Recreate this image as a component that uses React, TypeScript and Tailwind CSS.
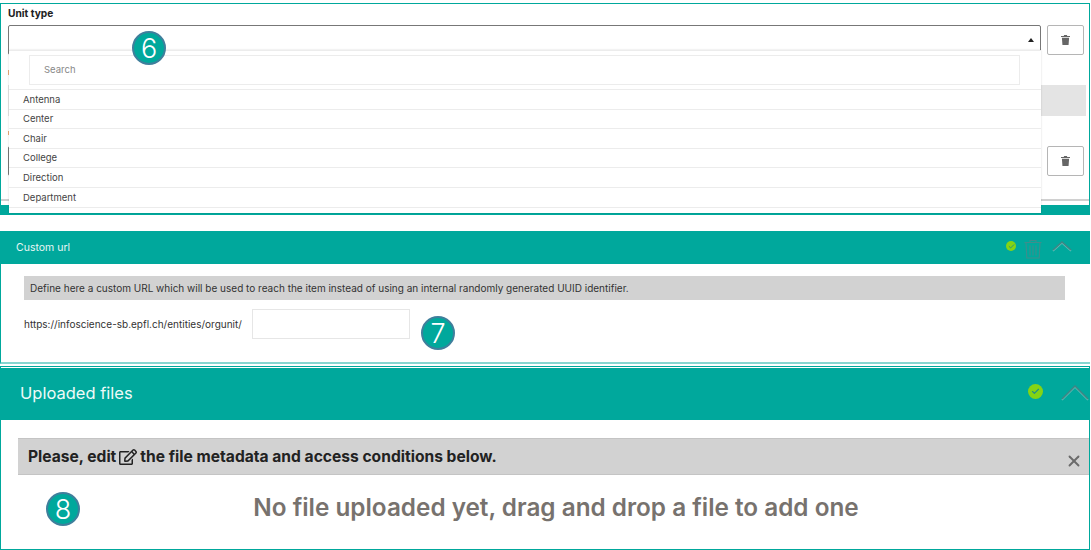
import { Check, X } from "lucide-react";
import { FaRegEdit } from "react-icons/fa";

const options = ["Antenna", "Center", "Chair", "College", "Direction", "Department"];

function Badge({ n, className }: { n: string; className: string }) {
  return (
    <div
      className={`absolute flex h-[34px] w-[34px] items-center justify-center rounded-full border-2 border-[#3f7f9c] bg-[#00a89c] text-[27px] font-light leading-none text-white ${className}`}
    >
      {n}
    </div>
  );
}

function TrashRow() {
  return (
    <div className="flex gap-[6px]">
      <div className="h-[30px] flex-1 rounded-[2px] border border-[#777] bg-white" />
      <button className="flex h-[30px] w-[37px] shrink-0 items-center justify-center rounded-[2px] border border-[#b5b5b5] bg-white">
        <svg width="9" height="10" viewBox="0 0 10 11" fill="#666">
          <path d="M3.5 0h3l.5 1h3v1.2H0V1h3zM1 3h8l-.6 8H1.6z" />
        </svg>
      </button>
    </div>
  );
}

function StatusDot({ large }: { large?: boolean }) {
  return (
    <span
      className={`flex items-center justify-center rounded-full bg-[#84d414] ${large ? "h-[15px] w-[15px]" : "h-[10px] w-[10px]"}`}
    >
      <Check size={large ? 9 : 7} strokeWidth={3} className="text-[#1c8f8c]" />
    </span>
  );
}

function Chevron({ w, h }: { w: number; h: number }) {
  return (
    <svg width={w} height={h + 1} viewBox={`0 0 ${w} ${h + 1}`} fill="none" strokeWidth="1.5">
      <path d={`M1 ${h}L${w / 2} 2L${w - 1} ${h}`} stroke="#63bdb6" />
      <path d={`M1 ${h - 1}L${w / 2} 1L${w - 1} ${h - 1}`} stroke="#3f8584" />
    </svg>
  );
}

function OutlineTrash() {
  return (
    <svg width="18" height="20" viewBox="0 0 18 20" fill="none" stroke="#3f8d8c" strokeWidth="1.1">
      <path d="M6 3V1.5h6V3M.5 3.5h17M2 3.5l.8 15.5h12.4L16 3.5M6 6.5v10M9 6.5v10M12 6.5v10" />
    </svg>
  );
}

export default function App() {
  return (
    <div className="relative h-[550px] w-[1091px] overflow-hidden bg-white pt-[3px] font-['Inter',sans-serif] text-[#333]">
      {/* unit type panel */}
      <section className="relative h-[212px] w-[1090px] overflow-hidden border border-[#00a89c] pl-[7px] pr-[5px]">
        <label className="block h-[21px] pt-[3px] text-[10.2px] font-bold leading-[13px] text-[#222]">Unit type</label>
        <div className="relative">
          <TrashRow />
          <span className="absolute right-[50px] top-[13px] h-0 w-0 border-x-[3px] border-b-[4px] border-x-transparent border-b-[#222]" />
        </div>
        <div className="mt-[30px] mr-[-2px] h-[31px] bg-[#e4e4e4]" />
        <div className="mt-[30px]">
          <TrashRow />
        </div>
        <div className="mx-[-7px] mt-[23px] h-[2px] bg-[#d0d0d0]" />
        <div className="mx-[-7px] mt-[4px] h-[11px] bg-[#00a89c]" />

        {/* open dropdown */}
        <div className="absolute left-[8px] top-[46px] w-[1032px] bg-white text-[9.5px] shadow-[0_0_2px_rgba(0,0,0,0.15)]">
          <div className="border-t border-[#ececec] px-[20px] py-[4px]">
            <div className="flex h-[30px] w-[991px] items-center border border-[#ececec] px-[14px] text-[#888]">Search</div>
          </div>
          {options.map((o) => (
            <div key={o} className="flex h-[19.6px] items-center border-t border-[#ececec] pl-[14px] pt-[1px] text-[#444]">
              {o}
            </div>
          ))}
          <div className="h-[6px] border-t border-[#ececec]" />
        </div>
        <span className="absolute left-[7px] top-[66px] h-[5px] w-[1px] bg-[#e0a070]" />
        <span className="absolute left-[7px] top-[127px] h-[4px] w-[1px] bg-[#e0a070]" />
      </section>

      {/* custom url panel */}
      <section className="mt-[16px] h-[133px] w-[1090px] border-b-2 border-l border-[#86d6d0] border-l-[#00a89c]">
        <div className="flex h-[33px] items-center bg-[#00a89c] pl-[15px] pr-[18px] text-[10.5px] text-[#e8f7f5]">
          <span>Custom url</span>
          <span className="ml-auto flex items-center">
            <span className="mb-[3px]">
              <StatusDot />
            </span>
            <span className="ml-[8px] mt-[2px]">
              <OutlineTrash />
            </span>
            <span className="ml-[10px] mt-[-2px]">
              <Chevron w={20} h={10} />
            </span>
          </span>
        </div>
        <div className="pl-[23px] pt-[12px]">
          <div className="flex h-[24px] w-[1041px] items-center bg-[#d2d2d2] pl-[6px] text-[10px] text-[#333]">
            Define here a custom URL which will be used to reach the item instead of using an internal randomly generated UUID identifier.
          </div>
          <div className="mt-[9px] flex items-center gap-[10px] text-[10px] text-[#333]">
            <span>https://infoscience-sb.epfl.ch/entities/orgunit/</span>
            <div className="h-[30px] w-[158px] border border-[#e6e6e6] bg-white" />
          </div>
        </div>
      </section>

      {/* uploaded files panel */}
      <section className="mt-[2px] h-[184px] w-[1090px] border border-[#00a89c] pt-[1px]">
        <div className="flex h-[52px] items-center bg-[#00a89c] pb-[1px] pl-[19px] text-[16.5px] text-[#eefaf8]">
          <span>Uploaded files</span>
          <span className="ml-auto flex items-center pb-[5px]">
            <StatusDot large />
            <span className="ml-[18px] mt-[4px]">
              <Chevron w={28} h={15} />
            </span>
          </span>
        </div>
        <div className="ml-[17px] mt-[18px] flex h-[37px] items-center border-y border-[#c4c4c4] bg-[#d2d2d2] pl-[10px] pr-[6px] pt-[1px] text-[15.6px] font-bold text-[#222]">
          <span>Please, edit</span>
          <FaRegEdit size={18} className="mx-[3px]" />
          <span>the file metadata and access conditions below.</span>
          <X size={18} strokeWidth={2.5} className="ml-auto mt-[8px] text-[#6b6b6b]" />
        </div>
        <div className="mt-[14px] pl-[22px] text-center text-[24.3px] font-semibold leading-[36px] text-[#77726e]">
          No file uploaded yet, drag and drop a file to add one
        </div>
      </section>

      <Badge n="6" className="left-[132px] top-[31px]" />
      <Badge n="7" className="left-[421px] top-[316px]" />
      <Badge n="8" className="left-[46px] top-[492px]" />
    </div>
  );
}
